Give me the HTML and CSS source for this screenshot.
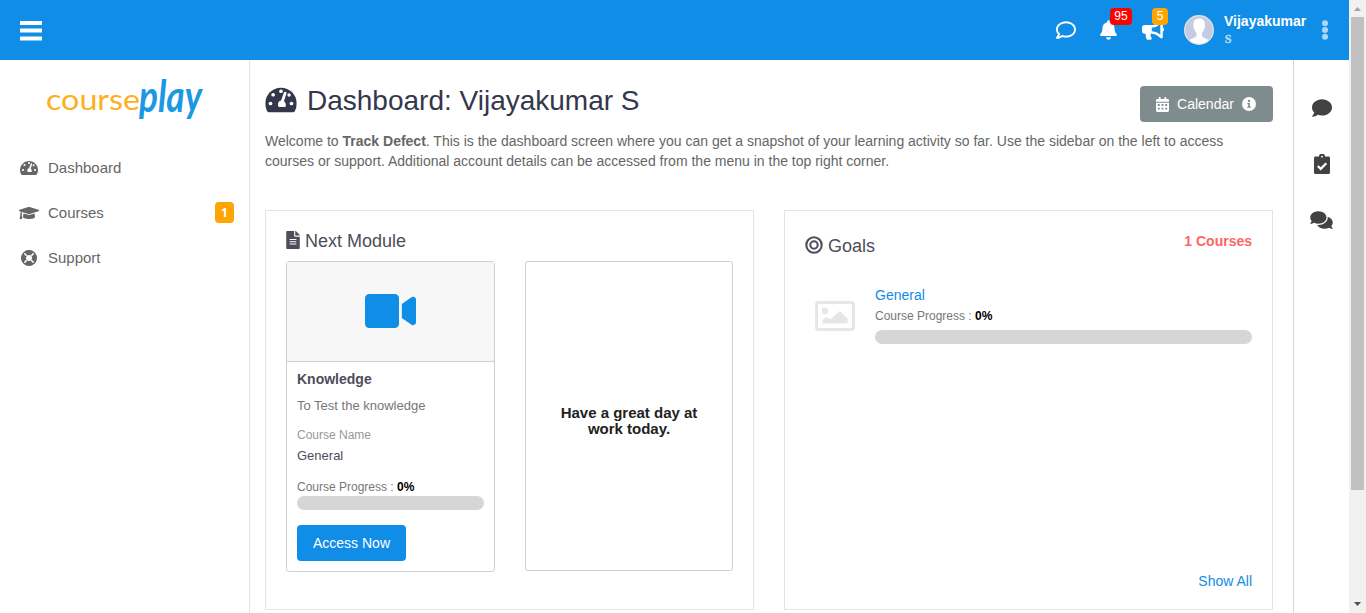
FILE: index.html
```html
<!DOCTYPE html>
<html lang="en">
<head>
<meta charset="utf-8">
<title>Dashboard</title>
<link rel="stylesheet" href="styles.css">
</head>
<body>
<svg class="sprite" aria-hidden="true">
  <defs>
    <mask id="gauge-mask"><rect width="576" height="512" fill="#fff"/><g fill="#000"><circle cx="288" cy="96" r="34"/><circle cx="144" cy="160" r="34"/><circle cx="96" cy="320" r="34"/><circle cx="480" cy="320" r="34"/><circle cx="435" cy="165" r="31"/><path d="M391 129a26 26 0 0 0-48-13L290 264c-42 8-58 45-56 72 0 21 3 37 13 48h119c20-29 15-75-24-104z"/></g></mask>
    <symbol id="gauge" viewBox="0 0 576 512"><path mask="url(#gauge-mask)" d="M288 32C129 32 0 161 0 320c0 53 14 102 39 145 6 9 16 15 28 15h442c12 0 22-6 28-15 25-43 39-92 39-145C576 161 447 32 288 32z"/></symbol>
    <symbol id="comment" viewBox="0 0 512 512"><path d="M256 32C114.600 32 0 125.100 0 240c0 49.600 21.400 95 57 130.700C44.500 421.100 2.700 466 2.200 466.500c-2.200 2.300-2.800 5.700-1.500 8.700S4.800 480 8 480c66.300 0 116-31.800 140.600-51.400 32.700 12.300 69 19.400 107.400 19.400 141.400 0 256-93.100 256-208S397.400 32 256 32z"/></symbol>
  </defs>
</svg>
<div class="window">
  <div class="page">
    <header class="topbar">
      <svg class="menu" viewBox="0 0 22 20"><path d="M0 0h22v4H0zM0 7.500h22v4H0zM0 15.500h22v4H0z"/></svg>
      <div class="actions">
        <span class="action chat"><svg viewBox="0 0 512 512"><path d="M256 32C114.600 32 0 125.100 0 240c0 47.600 19.900 91.200 52.900 126.300C38 405.700 7 439.100 6.500 439.500c-6.600 7-8.400 17.200-4.600 26S14.400 480 24 480c61.500 0 110-25.700 139.100-46.300C192 442.800 223.200 448 256 448c141.400 0 256-93.100 256-208S397.400 32 256 32zm0 368c-26.700 0-53.100-4.100-78.400-12.100l-22.700-7.200-19.500 13.800c-14.300 10.100-33.900 21.400-57.500 29 7.300-12.100 14.400-25.700 19.900-40.200l10.600-28.100-20.600-21.800C69.700 314.100 48 282.200 48 240c0-88.200 93.300-160 208-160s208 71.800 208 160-93.300 160-208 160z"/></svg></span>
        <span class="action bell"><svg viewBox="0 0 448 512"><path d="M224 512c35.320 0 63.970-28.650 63.970-64H160.030c0 35.350 28.650 64 63.970 64zm215.390-149.710c-19.320-20.760-55.470-51.990-55.470-154.290 0-77.700-54.480-139.900-127.940-155.160V32c0-17.670-14.320-32-31.980-32s-31.980 14.330-31.980 32v20.840C118.560 68.100 64.080 130.300 64.080 208c0 102.300-36.150 133.530-55.470 154.290-6 6.450-8.660 14.160-8.610 21.710.11 16.400 12.980 32 32.100 32h383.800c19.120 0 32-15.600 32.100-32 .05-7.550-2.610-15.270-8.610-21.710z"/></svg><span class="badge red">95</span></span>
        <span class="action horn"><svg viewBox="0 0 576 512"><path d="M576 240c0-23.630-12.950-44.040-32-55.120V32.010C544 23.260 537.020 0 512 0c-7.120 0-14.190 2.380-19.980 7.020l-85.030 68.030C364.280 109.190 310.660 128 256 128H64c-35.350 0-64 28.650-64 64v96c0 35.350 28.650 64 64 64h33.700c-1.390 10.480-2.180 21.140-2.180 32 0 39.770 9.260 77.350 25.560 110.940 5.190 10.690 16.520 17.060 28.400 17.060h74.280c26.050 0 41.690-29.840 25.900-50.560-16.400-21.520-26.150-48.360-26.150-77.440 0-11.110 1.620-21.790 4.410-32H256c54.660 0 108.280 18.810 150.980 52.950l85.030 68.030a32 32 0 0 0 19.980 7.020c24.920 0 32-22.780 32-32V295.130C563.050 284.040 576 263.630 576 240zm-96 141.420l-33.050-26.440C392.950 311.780 325.120 288 256 288v-96c69.120 0 136.950-23.780 190.950-66.980L480 98.580v282.840z"/></svg><span class="badge orange">5</span></span>
        <svg class="avatar" viewBox="0 0 30 30"><defs><clipPath id="face"><circle cx="15" cy="15" r="13.800"/></clipPath></defs><circle cx="15" cy="15" r="15" fill="#e3e5e8"/><circle cx="15" cy="15" r="13.800" fill="#c5cbe1"/><path clip-path="url(#face)" fill="#fff" d="M15 3.500c-4 0-5.800 2.700-5.500 6.500-.6 1.200 0 2.700.8 3.500.4 2 1.100 3.400 2.200 4.500v3c-1.200 2-5.500 2.500-7.500 4.500v5h20v-5c-2-2-6-2.500-7-4.500v-3c1.100-1.100 1.800-2.500 2.200-4.500.8-.8 1.200-2.300.6-3.500.3-3.800-1.500-6.500-5.800-6.500z"/></svg>
        <div class="user"><b>Vijayakumar</b><span>S</span></div>
        <svg class="dots" viewBox="0 0 6 20"><circle cx="3" cy="3.200" r="3"/><circle cx="3" cy="10" r="3"/><circle cx="3" cy="16.800" r="3"/></svg>
      </div>
    </header>
    <div class="body">
      <aside class="sidebar">
        <svg class="logo" viewBox="0 0 158 52"><text class="logo-course" x="-1" y="35" textLength="94" lengthAdjust="spacingAndGlyphs">course</text><text class="logo-play" transform="translate(92 37) scale(1 1.400)" textLength="63" lengthAdjust="spacingAndGlyphs">play</text></svg>
        <nav>
          <a class="nav-item"><span class="nav-icon"><svg width="18" height="16"><use href="#gauge"/></svg></span>Dashboard</a>
          <a class="nav-item"><span class="nav-icon"><svg width="20" height="16" viewBox="0 0 640 512"><path d="M622.340 153.200L343.400 67.500c-15.200-4.670-31.600-4.670-46.790 0L17.660 153.200c-23.540 7.230-23.540 38.360 0 45.590l48.630 14.940c-10.670 13.190-17.230 29.280-17.880 46.900C38.780 266.150 32 276.110 32 288c0 10.780 5.680 19.850 13.860 25.650L20.330 428.530C18.110 438.520 25.710 448 35.940 448h56.110c10.240 0 17.840-9.480 15.620-19.470L82.140 313.650C90.320 307.850 96 298.780 96 288c0-11.570-6.470-21.250-15.660-26.870.76-15.020 8.440-28.300 20.690-36.720L296.600 284.500c9.060 2.780 26.440 6.250 46.790 0l278.950-85.700c23.550-7.240 23.550-38.360 0-45.600zM352.790 315.090c-28.530 8.760-52.840 3.920-65.590 0l-145.020-44.550L128 384c0 35.350 85.960 64 192 64s192-28.650 192-64l-14.180-113.470-145.030 44.560z"/></svg></span>Courses<span class="count">1</span></a>
          <a class="nav-item"><span class="nav-icon"><svg width="16" height="16" viewBox="0 0 16 16"><circle cx="8" cy="8" r="5.400" fill="none" stroke="currentColor" stroke-width="4.800"/><path d="M3.200 3.200l2.500 2.500M12.800 3.200l-2.500 2.500M3.200 12.800l2.500-2.500M12.800 12.800l-2.500-2.500" stroke="#fff" stroke-width="1.600"/><circle cx="8" cy="8" r="7.300" fill="none" stroke="currentColor" stroke-width="1.200"/></svg></span>Support</a>
        </nav>
      </aside>
      <main class="main">
        <div class="title-row">
          <h1><svg width="32" height="28"><use href="#gauge"/></svg>Dashboard: Vijayakumar S</h1>
          <button class="calendar"><svg width="13" height="15" viewBox="0 0 448 512"><path fill-rule="evenodd" d="M0 464c0 26 22 48 48 48h352c26 0 48-22 48-48V192H0zM64 240h64v64H64zm128 0h64v64h-64zm128 0h64v64h-64zM64 368h64v64H64zm128 0h64v64h-64zm128 0h64v64h-64zM400 64h-48V16c0-9-7-16-16-16h-32c-9 0-16 7-16 16v48H160V16c0-9-7-16-16-16h-32c-9 0-16 7-16 16v48H48C22 64 0 86 0 112v48h448v-48c0-26-22-48-48-48z"/></svg><span>Calendar</span><svg width="14" height="14" viewBox="0 0 14 14"><circle cx="7" cy="7" r="7"/><circle cx="7" cy="3.900" r="1.200" fill="#7f8c8d"/><path fill="#7f8c8d" d="M5.400 6h2.500v3.500h.8v1.200H5.400V9.500h.8V7.200h-.8z"/></svg></button>
        </div>
        <p class="intro">Welcome to <b>Track Defect</b>. This is the dashboard screen where you can get a snapshot of your learning activity so far. Use the sidebar on the left to access courses or support. Additional account details can be accessed from the menu in the top right corner.</p>
        <div class="panels">
          <section class="panel next">
            <h2><svg width="14" height="18" viewBox="0 0 384 512"><path fill-rule="evenodd" d="M224 136V0H24C11 0 0 11 0 24v464c0 13 11 24 24 24h336c13 0 24-11 24-24V160H248c-13 0-24-11-24-24zM96 224h192v32H96zm0 64h192v32H96zm0 64h192v32H96zM384 122v6H256V0h6c6 0 13 3 17 7l98 98c5 5 7 11 7 17z"/></svg>Next Module</h2>
            <div class="cards">
              <article class="module">
                <div class="thumb"><svg width="51" height="46" viewBox="0 0 576 512"><path d="M336.200 64H47.800C21.400 64 0 85.400 0 111.800v288.400C0 426.600 21.400 448 47.800 448h288.400c26.400 0 47.800-21.400 47.800-47.800V111.800c0-26.400-21.400-47.800-47.800-47.800zm189.400 37.700L416 177.300v157.400l109.600 75.500c21.200 14.600 50.400-.3 50.400-25.800V127.500c0-25.400-29.100-40.400-50.400-25.800z"/></svg></div>
                <div class="details">
                  <h3>Knowledge</h3>
                  <p class="desc">To Test the knowledge</p>
                  <p class="label">Course Name</p>
                  <p class="value">General</p>
                  <p class="progress">Course Progress : <b>0%</b></p>
                  <div class="bar"></div>
                  <button class="access">Access Now</button>
                </div>
              </article>
              <article class="message">Have a great day at work today.</article>
            </div>
          </section>
          <section class="panel goals">
            <div class="goals-head"><h2><svg width="18" height="18" viewBox="0 0 18 18"><g fill="none" stroke="currentColor" stroke-width="2.100"><circle cx="9" cy="9" r="7.700"/><circle cx="9" cy="9" r="3.700"/></g></svg>Goals</h2><b>1 Courses</b></div>
            <div class="goal">
              <svg class="picture" width="40" height="30" viewBox="0 0 40 30"><rect x="1.500" y="1.500" width="37" height="27" rx="2" fill="none" stroke="currentColor" stroke-width="3"/><circle cx="10" cy="10" r="3.200"/><path d="M7.500 22.500v-3.200l3.500-3.300 4.500 2.600 9.200-8.600 8 7.500v5z"/></svg>
              <div class="goal-info"><a>General</a><p class="progress">Course Progress : <b>0%</b></p><div class="bar"></div></div>
            </div>
            <a class="show-all">Show All</a>
          </section>
        </div>
      </main>
      <aside class="tools">
        <svg width="20" height="20"><use href="#comment"/></svg>
        <svg width="16" height="20" viewBox="0 0 16 20"><path d="M1.500 2.500H5a3 3 0 0 1 6 0h3.500c.8 0 1.500.7 1.500 1.500v14.500c0 .8-.7 1.500-1.500 1.500h-13C.7 20 0 19.300 0 18.500V4c0-.8.7-1.500 1.500-1.500z"/><circle cx="8" cy="2.700" r=".9" fill="#fff"/><path d="M3.800 12l2.900 2.900 5.600-5.600" fill="none" stroke="#fff" stroke-width="2.200"/></svg>
        <svg width="23" height="20" viewBox="0 0 576 512"><path d="M416 192c0-88.400-93.100-160-208-160S0 103.600 0 192c0 34.300 14.100 65.900 38 92-13.400 30.200-35.500 54.200-35.800 54.500-2.200 2.300-2.800 5.700-1.500 8.700S4.800 352 8 352c36.600 0 66.900-12.300 88.700-25 32.200 15.700 70.300 25 111.300 25 114.900 0 208-71.600 208-160zm122 220c23.900-26 38-57.700 38-92 0-66.900-53.500-124.200-129.300-148.100.9 6.600 1.300 13.300 1.300 20.100 0 105.900-107.700 192-240 192-10.800 0-21.300-.8-31.700-1.900C207.800 439.600 281.800 480 368 480c41 0 79.100-9.200 111.300-25 21.800 12.700 52.100 25 88.700 25 3.200 0 6.100-1.900 7.300-4.800 1.300-2.900.7-6.300-1.500-8.700-.3-.3-22.400-24.200-35.800-54.500z"/></svg>
      </aside>
    </div>
  </div>
  <div class="scrollbar"><svg viewBox="0 0 17 17"><path fill="#a3a3a3" d="M5 11l3.500-4 3.500 4z"/></svg><div class="thumb-bar"></div><svg viewBox="0 0 17 17"><path fill="#505050" d="M5 6h7l-3.500 4z"/></svg></div>
</div>
</body>
</html>
```

FILE: styles.css
```css
* { box-sizing: border-box; }
body { margin: 0; background: #fff; color: #666; font: 14px/20px "Liberation Sans", Arial, sans-serif; overflow: hidden; }
svg { display: block; flex: none; fill: currentColor; }
h1, h2, h3, p { margin: 0; font-weight: normal; }
button { border: 0; color: #fff; font: inherit; }
.sprite { position: absolute; width: 0; height: 0; }
.window { display: flex; height: 613px; }
.page { width: 1349px; display: flex; flex-direction: column; }

.topbar { height: 60px; flex: none; background: #108de7; color: #fff; display: flex; justify-content: space-between; padding: 0 21px 0 20px; }
.menu { width: 22px; height: 20px; margin-top: 21px; }
.actions { display: flex; }
.action { position: relative; margin-top: 20px; height: 20px; }
.chat { width: 20px; margin-right: 24px; }
.bell { width: 17px; margin-right: 25px; }
.horn { width: 22px; margin-right: 20px; }
.action svg { width: 100%; height: 20px; }
.badge { position: absolute; top: -12px; height: 17px; line-height: 17px; font-size: 12px; text-align: center; border-radius: 4px; }
.red { left: 10px; width: 22px; background: #f00; }
.orange { left: 10px; width: 16px; background: orange; }
.avatar { width: 30px; height: 30px; margin-top: 15px; }
.user { width: 108px; padding: 13px 0 0 10px; display: flex; flex-direction: column; line-height: 16px; }
.user b { font-size: 14px; }
.user span { font: bold 12px/20px "Liberation Serif", serif; opacity: .65; padding-left: 1px; -webkit-text-stroke: .4px #fff; }
.dots { width: 6px; height: 20px; margin-top: 20px; opacity: .65; }

.body { flex: 1; display: flex; min-height: 0; }
.sidebar { width: 250px; border-right: 1px solid #e4e4e4; padding-top: 15px; }
.logo { width: 158px; height: 52px; margin-left: 47px; overflow: visible; }
.logo-course { font: 29px Lato, sans-serif; fill: #fdb022; }
.logo-play { font: italic bold 31px Lato, sans-serif; fill: #1b98e4; }
nav { padding: 18px 15px 0 18px; }
.nav-item { height: 45px; display: flex; align-items: center; font-size: 15px; }
.nav-icon { width: 22px; margin-right: 8px; display: flex; justify-content: center; }
.count { margin-left: auto; width: 19px; height: 21px; border-radius: 4px; background: orange; color: #fff; font: bold 12px/21px "Open Sans", sans-serif; text-align: center; }

.main { width: 1043px; padding: 22px 20px 0 15px; }
.title-row { display: flex; justify-content: space-between; height: 44px; }
h1 { display: flex; gap: 10px; font-size: 28px; line-height: 38px; color: #34374c; }
h1 svg { margin-top: 4px; }
.calendar { width: 133px; height: 36px; margin-top: 4px; border-radius: 4px; background: #7f8c8d; display: flex; align-items: center; justify-content: center; gap: 8px; padding: 0 1px 0 0; }
.intro { margin-top: 5px; line-height: 20px; width: 990px; }
.panels { display: grid; grid-template-columns: 489px 489px; gap: 30px; margin-top: 39px; }
.panel { height: 400px; border: 1px solid #e4e4e4; padding: 20px; }
h2 { display: flex; align-items: center; gap: 5px; font-size: 18px; line-height: 20px; color: #4d4d5b; }
h2 svg { margin-top: -2px; }
.cards { display: flex; align-items: flex-start; gap: 30px; margin-top: 10px; }
.module { width: 209px; height: 311px; border: 1px solid #d0d0d0; border-radius: 3px; }
.thumb { height: 100px; background: #f7f7f7; border-bottom: 1px solid #d0d0d0; color: #108de7; display: flex; align-items: center; justify-content: center; padding-bottom: 2px; }
.details { padding: 7px 10px; }
h3 { font-size: 14px; line-height: 20px; font-weight: bold; color: #4d4d5b; }
.desc { font-size: 13px; margin-top: 7px; color: #777; }
.label { font-size: 12px; margin-top: 9px; color: #999; }
.value { font-size: 13px; margin-top: 1px; color: #4d4d5b; }
.progress { font-size: 12px; color: #777; }
.progress b { color: #000; }
.details .progress { margin-top: 11px; padding-top: 1px; line-height: 18px; }
.bar { height: 14px; border-radius: 7px; background: #d6d6d6; }
.access { display: block; width: 109px; height: 36px; margin-top: 15px; padding: 0; border-radius: 4px; background: #108de7; }
.message { width: 208px; height: 310px; border: 1px solid #d0d0d0; border-radius: 3px; display: flex; align-items: center; padding: 10px 30px 0; font-size: 15px; line-height: 16px; font-weight: bold; text-align: center; color: #222; }

.goals { display: flex; flex-direction: column; }
.goals-head { display: flex; justify-content: space-between; }
.goals-head h2 { margin-top: 5px; }
.goals-head b { color: #ff6464; }
.goal { display: flex; gap: 20px; margin-top: 29px; padding-left: 10px; }
.picture { margin-top: 16px; color: #e5e7e7; }
.goal-info { flex: 1; }
.goal-info a, .show-all { color: #108de7; }
.goal-info a { display: block; }
.goal-info .progress { line-height: 22px; }
.goal-info .bar { margin-top: 3px; }
.show-all { margin-top: auto; margin-bottom: -2px; align-self: flex-end; }

.tools { width: 56px; border-left: 1px solid #d8d8d8; color: #424242; display: flex; flex-direction: column; align-items: center; gap: 36px; padding-top: 38px; }
.scrollbar { width: 17px; background: #f1f1f1; display: flex; flex-direction: column; padding: 0 1px 0 2px; }
.scrollbar svg { width: 17px; height: 17px; margin-left: -2px; }
.thumb-bar { height: 473px; width: 13px; background: #c1c1c1; margin-bottom: auto; }
```
